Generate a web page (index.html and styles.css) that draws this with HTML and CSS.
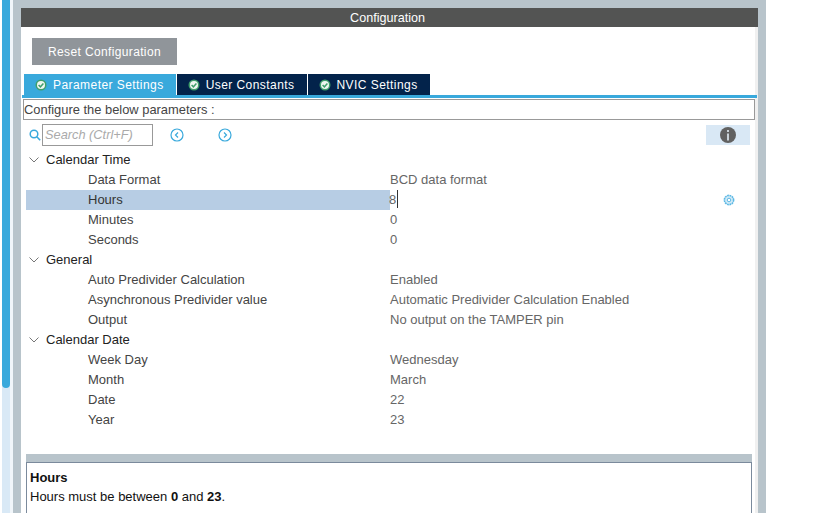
FILE: index.html
```html
<!DOCTYPE html>
<html lang="en">
<head>
    <meta charset="UTF-8">
    <title>Configuration</title>
    <link rel="stylesheet" href="styles.css">
</head>
<body>
    <div class="page">
        <div class="scrollbar"><div class="thumb"></div></div>
        <div class="frame">
            <div class="title">Configuration</div>
            <div class="content">
                <button class="reset">Reset Configuration</button>
                <div class="tabs">
                    <div class="tab active">
                        <svg class="check" viewBox="0 0 12 12"><circle cx="6" cy="6" r="5.5" fill="#3f9f6b"/><circle cx="6" cy="6" r="4" fill="#eef6f0"/><path d="M3.6 6l1.8 1.8 3-3.2" fill="none" stroke="#3f9f6b" stroke-width="1.5"/></svg>
                        Parameter Settings
                    </div>
                    <div class="tab">
                        <svg class="check" viewBox="0 0 12 12"><circle cx="6" cy="6" r="5.5" fill="#3f9f6b"/><circle cx="6" cy="6" r="4" fill="#eef6f0"/><path d="M3.6 6l1.8 1.8 3-3.2" fill="none" stroke="#3f9f6b" stroke-width="1.5"/></svg>
                        User Constants
                    </div>
                    <div class="tab">
                        <svg class="check" viewBox="0 0 12 12"><circle cx="6" cy="6" r="5.5" fill="#3f9f6b"/><circle cx="6" cy="6" r="4" fill="#eef6f0"/><path d="M3.6 6l1.8 1.8 3-3.2" fill="none" stroke="#3f9f6b" stroke-width="1.5"/></svg>
                        NVIC Settings
                    </div>
                </div>
                <div class="tab-line"></div>
                <div class="configure">Configure the below parameters :</div>
                <div class="toolbar">
                    <svg class="search-icon" viewBox="0 0 12 12"><circle cx="5" cy="5" r="3.8" fill="none" stroke="#39a9dc" stroke-width="1.5"/><path d="M7.8 7.8l3.4 3.4" stroke="#39a9dc" stroke-width="1.6"/></svg>
                    <div class="search">Search (Ctrl+F)</div>
                    <svg class="nav prev" viewBox="0 0 14 14"><circle cx="7" cy="7" r="6" fill="none" stroke="#39a9dc" stroke-width="1.2"/><path d="M8 4.5L5.5 7 8 9.5" fill="none" stroke="#39a9dc" stroke-width="1.2"/></svg>
                    <svg class="nav next" viewBox="0 0 14 14"><circle cx="7" cy="7" r="6" fill="none" stroke="#39a9dc" stroke-width="1.2"/><path d="M6 4.5L8.5 7 6 9.5" fill="none" stroke="#39a9dc" stroke-width="1.2"/></svg>
                    <div class="info">
                        <svg viewBox="0 0 16 16"><circle cx="8" cy="8" r="8" fill="#616161"/><rect x="7.2" y="6.5" width="1.6" height="7" fill="#e4eef6"/><rect x="7.2" y="3" width="1.6" height="2" fill="#e4eef6"/></svg>
                    </div>
                </div>
                <div class="tree">
                    <div class="group"><svg class="chevron" viewBox="0 0 10 6"><path d="M.5.5L5 5 9.5.5" fill="none" stroke="#777"/></svg>Calendar Time</div>
                    <div class="row"><span class="name">Data Format</span><span class="value">BCD data format</span></div>
                    <div class="row selected">
                        <span class="name">Hours</span>
                        <span class="value"><span class="editing">8</span></span>
                        <svg class="gear" viewBox="0 0 12 12"><circle cx="6" cy="6" r="4.6" fill="#d5ecf8" stroke="#5cb8e4" stroke-width="1.6" stroke-dasharray="1.8 .6"/><circle cx="6" cy="6" r="1.8" fill="white" stroke="#5cb8e4"/></svg>
                    </div>
                    <div class="row"><span class="name">Minutes</span><span class="value">0</span></div>
                    <div class="row"><span class="name">Seconds</span><span class="value">0</span></div>
                    <div class="group"><svg class="chevron" viewBox="0 0 10 6"><path d="M.5.5L5 5 9.5.5" fill="none" stroke="#777"/></svg>General</div>
                    <div class="row"><span class="name">Auto Predivider Calculation</span><span class="value">Enabled</span></div>
                    <div class="row"><span class="name">Asynchronous Predivider value</span><span class="value">Automatic Predivider Calculation Enabled</span></div>
                    <div class="row"><span class="name">Output</span><span class="value">No output on the TAMPER pin</span></div>
                    <div class="group"><svg class="chevron" viewBox="0 0 10 6"><path d="M.5.5L5 5 9.5.5" fill="none" stroke="#777"/></svg>Calendar Date</div>
                    <div class="row"><span class="name">Week Day</span><span class="value">Wednesday</span></div>
                    <div class="row"><span class="name">Month</span><span class="value">March</span></div>
                    <div class="row"><span class="name">Date</span><span class="value">22</span></div>
                    <div class="row"><span class="name">Year</span><span class="value">23</span></div>
                </div>
                <div class="splitter"></div>
                <div class="description">
                    <b>Hours</b><br>
                    Hours must be between <b>0</b> and <b>23</b>.
                </div>
            </div>
        </div>
    </div>
</body>
</html>
```

FILE: styles.css
```css
html, body {
    margin: 0;
    height: 100%;
    overflow: hidden;
    background: white;
}

body {
    font-family: "Liberation Sans", Arial, sans-serif;
    font-size: 13px;
    color: #333;
}

.page {
    display: flex;
    height: 513px;
    width: 766px;
    padding-left: 2px;
    box-sizing: border-box;
}

.scrollbar {
    width: 8px;
    background: #d9e9f6;
    flex-shrink: 0;
}

.thumb {
    height: 388px;
    background: #39a9dc;
    border-radius: 0 0 4px 4px;
}

.frame {
    flex: 1;
    margin-left: 3px;
    background: #b8c4cb;
    padding: 8px 8px 0;
    display: flex;
    flex-direction: column;
    box-shadow: -3px 0 0 #f1f6fa;
}

.title {
    height: 19px;
    line-height: 20px;
    padding-right: 4px;
    background: #535453;
    color: white;
    font-size: 12.6px;
    text-align: center;
    flex-shrink: 0;
}

.content {
    flex: 1;
    background: white;
    border-right: 3px solid #f0f0f0;
    display: flex;
    flex-direction: column;
}

.reset {
    width: 145px;
    height: 27px;
    margin: 11px 0 9px 11px;
    padding: 0;
    background: #90959a;
    border: none;
    color: white;
    font-family: inherit;
    font-size: 12px;
    letter-spacing: 0.36px;
    flex-shrink: 0;
}

.tabs {
    display: flex;
    gap: 1px;
    height: 21px;
    margin-left: 3px;
    flex-shrink: 0;
}

.tab {
    display: flex;
    align-items: center;
    gap: 6px;
    padding: 0 12px 0 11px;
    background: #03234b;
    color: white;
    font-size: 12px;
    letter-spacing: 0.44px;
}

.tab.active {
    background: #39a9dc;
}

.check {
    width: 12px;
    height: 12px;
}

.tab-line {
    height: 3px;
    margin-left: 1px;
    margin-right: -2px;
    background: #39a9dc;
    flex-shrink: 0;
}

.configure {
    height: 19px;
    line-height: 20px;
    margin: 1px 0 0 2px;
    border: 1px solid #999;
    flex-shrink: 0;
    font-size: 12.9px;
    color: #444;
}

.toolbar {
    display: flex;
    align-items: center;
    height: 22px;
    margin-top: 4px;
    padding-left: 8px;
    flex-shrink: 0;
}

.search-icon {
    width: 12px;
    height: 12px;
    margin-right: 1px;
}

.search {
    width: 107px;
    height: 20px;
    line-height: 20px;
    border: 1px solid #999;
    padding-left: 2px;
    font-size: 12.8px;
    font-style: italic;
    color: #aaa;
}

.nav {
    width: 14px;
    height: 14px;
}

.nav.prev {
    margin-left: 17px;
}

.nav.next {
    margin-left: 34px;
}

.info {
    display: flex;
    align-items: center;
    justify-content: center;
    width: 44px;
    height: 20px;
    margin-left: auto;
    margin-right: 5px;
    background: #d9e8f5;
}

.info svg {
    width: 16px;
    height: 16px;
}

.tree {
    flex: 1;
    margin-top: 4px;
    padding-left: 5px;
    padding-right: 3px;
}

.group {
    display: flex;
    height: 20px;
    line-height: 19px;
    color: #222;
}

.chevron {
    width: 10px;
    height: 6px;
    margin: 7px 7px 0 3px;
}

.row {
    position: relative;
    display: flex;
    height: 20px;
    line-height: 19px;
}

.name {
    width: 364px;
    height: 20px;
    padding-left: 62px;
    box-sizing: border-box;
    flex-shrink: 0;
    color: #444;
}

.value {
    color: #666;
}

.row.selected .name {
    background: #b7cde4;
    color: #333;
}

.editing {
    display: inline-block;
    height: 18px;
    border-right: 1px solid #333;
    padding-right: 1px;
    margin-left: -1px;
}

.gear {
    position: absolute;
    left: 697px;
    top: 4px;
    width: 12px;
    height: 12px;
}

.splitter {
    height: 8px;
    margin: 0 3px 0 5px;
    background: #b8c4cb;
    flex-shrink: 0;
}

.description {
    height: 45px;
    margin: 0 3px 0 5px;
    padding: 5px 3px 0;
    border-top: 1px solid #7b8a9c;
    border-left: 1px solid #7b8a9c;
    border-right: 1px solid #7b8a9c;
    line-height: 19px;
    color: #111;
    flex-shrink: 0;
}
```
